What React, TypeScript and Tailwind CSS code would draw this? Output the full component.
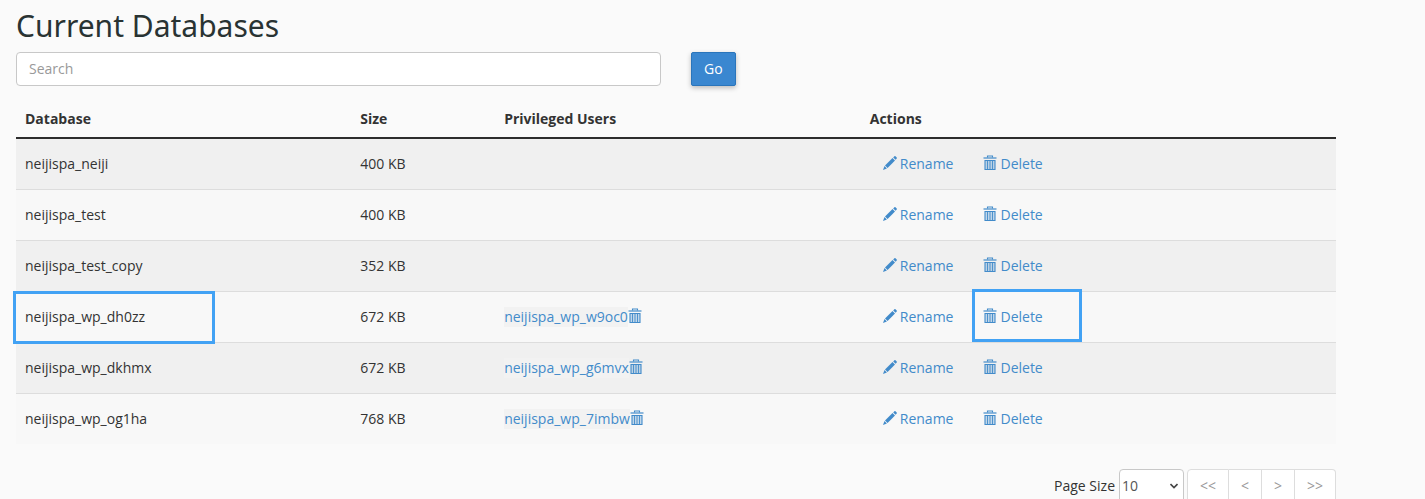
import { useState } from 'react';

interface Database {
  name: string;
  size: string;
  user?: string;
  marked?: boolean;
}

const databases: Database[] = [
  { name: 'neijispa_neiji', size: '400 KB' },
  { name: 'neijispa_test', size: '400 KB' },
  { name: 'neijispa_test_copy', size: '352 KB' },
  { name: 'neijispa_wp_dh0zz', size: '672 KB', user: 'neijispa_wp_w9oc0', marked: true },
  { name: 'neijispa_wp_dkhmx', size: '672 KB', user: 'neijispa_wp_g6mvx' },
  { name: 'neijispa_wp_og1ha', size: '768 KB', user: 'neijispa_wp_7imbw' },
];

const pageLinks = [
  { text: '<<', label: 'First page', className: 'w-[42px] border-l rounded-l' },
  { text: '<', label: 'Previous page', className: 'w-[33px]' },
  { text: '>', label: 'Next page', className: 'w-[33px]' },
  { text: '>>', label: 'Last page', className: 'w-[41px] rounded-r' },
];

function PencilIcon() {
  return (
    <svg viewBox="0 0 14 14" className="mb-0.5 w-3.5 h-3.5 shrink-0" fill="currentColor" aria-hidden="true">
      <path d="M11.400.3a.8.8 0 0 1 1.100 0l1.200 1.200a.8.8 0 0 1 0 1.100l-1.100 1.200L10.200 1.400z" />
      <path d="M9.500 2l2.500 2.500-7.400 7.500L2 9.500z" />
      <path d="M1.500 10.100l2.400 2.400L0 14z" />
    </svg>
  );
}

function TrashIcon() {
  return (
    <svg viewBox="0 0 14 16" className="mb-0.5 w-3.5 h-4 shrink-0" fill="none" stroke="currentColor" aria-hidden="true">
      <path d="M4.500 2.500V1h5v1.500" strokeWidth="1.100" />
      <path d="M.5 3h13" strokeWidth="1.200" />
      <path d="M2 5.500h10v9H2z" fill="currentColor" fillOpacity=".3" strokeWidth="1.100" />
      <path d="M4.500 6v8M7 6v8M9.500 6v8" strokeWidth=".9" />
    </svg>
  );
}

function App() {
  const [search, setSearch] = useState('');
  const [pageSize, setPageSize] = useState('10');

  return (
    <div className="h-screen overflow-hidden bg-[#fafafa] pl-4 pr-[89px] pt-[9px] font-['Open_Sans',sans-serif] text-sm leading-5 text-[#333333]">
      <h2 className="font-['Noto_Sans','Open_Sans',sans-serif] text-[30px] leading-[33px] text-[#293333]">
        Current Databases
      </h2>

      {/* Search */}
      <form className="mt-2.5 flex gap-[30px]" onSubmit={(e) => e.preventDefault()}>
        <input
          type="text"
          aria-label="Search databases"
          placeholder="Search"
          value={search}
          onChange={(e) => setSearch(e.target.value)}
          className="h-[34px] w-[calc(50%-15px)] rounded border border-[#c8c8c8] bg-white px-3 pb-0.5 placeholder:text-[#999999]"
        />
        <button
          type="submit"
          className="h-[34px] rounded-[2px] border border-[#2a75bb] bg-[#3a87d0] px-3 text-white shadow-[0_2px_5px_rgba(0,0,0,0.25)]"
        >
          Go
        </button>
      </form>

      {/* Databases */}
      <table className="mt-[15px] w-full table-fixed border-separate border-spacing-0 text-left">
        <thead>
          <tr className="h-[38px]">
            <th className="w-[25.4%] border-b-2 border-[#2d2d2d] px-[9px] font-bold">Database</th>
            <th className="w-[10.9%] border-b-2 border-[#2d2d2d] px-[9px] font-bold">Size</th>
            <th className="w-[27.7%] border-b-2 border-[#2d2d2d] px-[9px] font-bold">Privileged Users</th>
            <th className="border-b-2 border-[#2d2d2d] px-[9px] font-bold">Actions</th>
          </tr>
        </thead>
        <tbody className="[&>tr+tr>td]:border-t">
          {databases.map((db) => (
            <tr key={db.name} className="odd:bg-[#f0f0f0] even:bg-[#f8f8f8]">
              <td className="border-[#dddddd] px-[9px] py-2">
                <div className="relative">
                  {db.name}
                  {db.marked && (
                    <span className="pointer-events-none absolute -left-3 -top-4 z-10 h-[53px] w-[202px] border-3 border-[#42a2f4]" />
                  )}
                </div>
              </td>
              <td className="border-[#dddddd] px-[9px] py-2">{db.size}</td>
              <td className="border-[#dddddd] px-[9px] py-2">
                {db.user && (
                  <span className="flex items-center text-[#428bca]">
                    <a href="#user" className="bg-[#f2f2f2]">{db.user}</a>
                    <button type="button" aria-label={`Revoke ${db.user}`}>
                      <TrashIcon />
                    </button>
                  </span>
                )}
              </td>
              <td className="border-[#dddddd] px-[9px] py-2">
                <div className="flex gap-1 text-[#428bca]">
                  <button type="button" className="flex h-[34px] items-center gap-[3px] px-[13px]">
                    <PencilIcon />
                    Rename
                  </button>
                  <button type="button" className="relative flex h-[34px] items-center gap-[3px] px-[13px]">
                    <TrashIcon />
                    Delete
                    {db.marked && (
                      <span className="pointer-events-none absolute -top-[11px] left-0.5 z-10 h-[53px] w-[110px] border-3 border-[#42a2f4]" />
                    )}
                  </button>
                </div>
              </td>
            </tr>
          ))}
        </tbody>
      </table>

      {/* Pagination */}
      <div className="mt-[25px] flex items-center justify-end">
        <label htmlFor="page-size" className="mr-1">Page Size</label>
        <div className="relative mr-[3px]">
          <select
            id="page-size"
            value={pageSize}
            onChange={(e) => setPageSize(e.target.value)}
            className="h-[34px] w-[65px] appearance-none rounded border border-[#c8c8c8] bg-white pl-0.5 text-[#555555]"
          >
            <option>10</option>
            <option>20</option>
            <option>50</option>
            <option>100</option>
          </select>
          <svg
            viewBox="0 0 8 6"
            className="pointer-events-none absolute right-1.5 top-3.5 h-1.5 w-2"
            fill="none"
            stroke="#444444"
            strokeWidth="1.600"
            aria-hidden="true"
          >
            <path d="M.5 1L4 4.600 7.500 1" />
          </svg>
        </div>
        <nav className="flex" aria-label="Pages">
          {pageLinks.map((link) => (
            <button
              key={link.label}
              type="button"
              aria-label={link.label}
              className={`h-[34px] border-y border-r border-[#dddddd] bg-white text-[#999999] ${link.className}`}
            >
              {link.text}
            </button>
          ))}
        </nav>
      </div>
    </div>
  );
}

export default App;
